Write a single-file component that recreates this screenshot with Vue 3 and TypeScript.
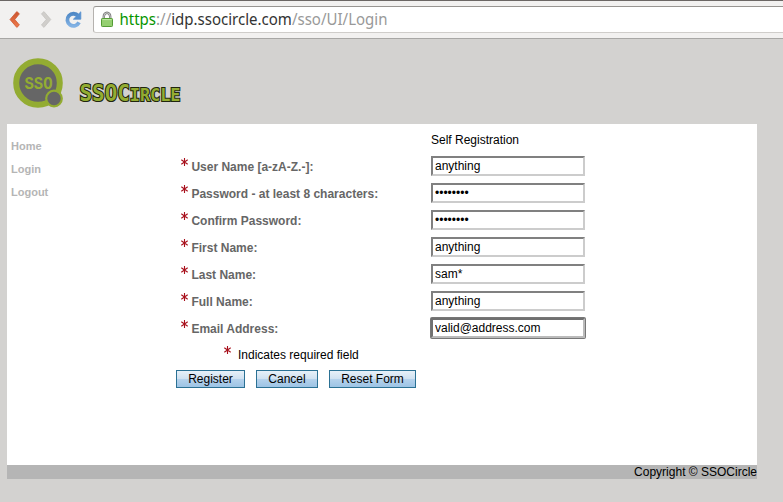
<script setup lang="ts">
import { ref } from 'vue'

interface Field {
  id: string
  label: string
  type: 'text' | 'password'
  value: string
  active?: boolean
}

interface Action {
  name: string
  label: string
}

const links: string[] = ['Home', 'Login', 'Logout']
const actions: Action[] = [
  { name: 'register', label: 'Register' },
  { name: 'cancel', label: 'Cancel' },
  { name: 'reset', label: 'Reset Form' },
]

const fields = ref<Field[]>([
  { id: 'user', label: 'User Name [a-zA-Z.-]:', type: 'text', value: 'anything' },
  { id: 'password', label: 'Password - at least 8 characters:', type: 'password', value: 'anything' },
  { id: 'confirm', label: 'Confirm Password:', type: 'password', value: 'anything' },
  { id: 'first', label: 'First Name:', type: 'text', value: 'anything' },
  { id: 'last', label: 'Last Name:', type: 'text', value: 'sam*' },
  { id: 'full', label: 'Full Name:', type: 'text', value: 'anything' },
  { id: 'email', label: 'Email Address:', type: 'text', value: 'valid@address.com', active: true },
])
</script>

<template>
  <div class="window">
    <div class="toolbar">
      <svg class="nav" width="93" height="36" viewBox="0 0 93 36">
        <defs>
          <linearGradient id="back" x1="0" y1="0" x2="0" y2="1">
            <stop offset="0" stop-color="#c9532f" />
            <stop offset="1" stop-color="#f07c4c" />
          </linearGradient>
          <linearGradient id="reload" x1="0" y1="0" x2="0" y2="1">
            <stop offset="0" stop-color="#5089c6" />
            <stop offset="1" stop-color="#82b2e4" />
          </linearGradient>
        </defs>
        <path d="M16.8 9.6L19.4 11.8L14.8 17.5L19.4 23L16.8 25.4L10 17.5Z" fill="url(#back)" stroke="#cf5b35" stroke-width=".8" stroke-linejoin="round" />
        <path d="M44 9.6L41.4 11.8L46.2 17.5L41.4 23L44 25.4L50.8 17.5Z" fill="#d0cecb" stroke="#c3c1be" stroke-width=".7" stroke-linejoin="round" />
        <path d="M78.2 14A6.1 6.1 0 1 0 79 20.4" fill="none" stroke="url(#reload)" stroke-width="3.8" />
        <path d="M80.8 9.8V17.2H73.4Z" fill="#5791cf" stroke="#5791cf" stroke-width=".8" stroke-linejoin="round" />
      </svg>
      <div class="address">
        <svg width="340" height="25" viewBox="0 0 340 25">
          <path d="M9.8 12.5V9.5A3.2 3.7 0 0 1 16.2 9.5V12.5" fill="none" stroke="#777" stroke-width="2.4" />
          <path d="M9.8 12.5V9.5A3.2 3.7 0 0 1 16.2 9.5V12.5" fill="none" stroke="#d5d5d5" stroke-width=".9" />
          <rect x="7.5" y="11.5" width="11" height="8" rx=".8" fill="#94cf70" stroke="#559c36" />
          <path d="M8.5 12.6H17.5" stroke="#c0e8a6" />
          <text class="url" x="25.5" y="18" textLength="268" lengthAdjust="spacingAndGlyphs"><tspan class="secure">https</tspan><tspan class="muted">://</tspan>idp.ssocircle.com<tspan class="muted">/sso/UI/Login</tspan></text>
        </svg>
      </div>
    </div>

    <header class="banner">
      <svg width="240" height="85" viewBox="0 0 240 85">
        <circle cx="38" cy="44" r="21.8" fill="#666" stroke="#93ac32" stroke-width="6" />
        <circle cx="54" cy="59.5" r="7.8" fill="#666" stroke="#93ac32" stroke-width="2.2" />
        <text class="badge" x="24.5" y="50" textLength="28" lengthAdjust="spacingAndGlyphs">SSO</text>
        <text class="brand" x="79.5" y="62" textLength="101" lengthAdjust="spacingAndGlyphs">SSOC<tspan class="small">IRCLE</tspan></text>
      </svg>
    </header>

    <main class="panel">
      <nav class="menu">
        <a v-for="link in links" :key="link">{{ link }}</a>
      </nav>
      <form class="form" @submit.prevent>
        <div class="title">Self Registration</div>
        <div v-for="field in fields" :key="field.id" class="row">
          <svg class="star" width="7" height="9" viewBox="0 0 7 9"><path d="M3.5 0V8M.3 1.8L6.7 6.2M6.7 1.8L.3 6.2" /></svg>
          <label :for="field.id">{{ field.label }}</label>
          <input :id="field.id" v-model="field.value" :type="field.type" :class="{ active: field.active }" />
        </div>
        <div class="note">
          <svg class="star" width="7" height="9" viewBox="0 0 7 9"><path d="M3.5 0V8M.3 1.8L6.7 6.2M6.7 1.8L.3 6.2" /></svg>
          <span>Indicates required field</span>
        </div>
        <div class="actions">
          <button v-for="action in actions" :key="action.name" type="button" :class="action.name">{{ action.label }}</button>
        </div>
      </form>
    </main>
    <footer class="footer">Copyright © SSOCircle</footer>
  </div>
</template>

<style>
body {
  background: #d3d2d0;
  overflow: hidden;
}
</style>

<style scoped>
.window {
  width: 783px;
  height: 502px;
  font: 12px/14px "Liberation Sans", sans-serif;
  color: #000;
}
.toolbar {
  box-sizing: border-box;
  height: 39px;
  display: flex;
  background: #f2f1f0;
  border-top: 1px solid #6b6765;
  border-bottom: 1px solid #a8a7a5;
}
.nav {
  flex: none;
  margin-top: 1px;
}
.address {
  box-sizing: border-box;
  flex: 1;
  height: 27px;
  margin-top: 5px;
  border: 1px solid #b5b2af;
  border-top-color: #989592;
  border-bottom-color: #cfcdca;
  border-right: 0;
  border-radius: 3px 0 0 3px;
  background: #fff;
}
.address svg {
  display: block;
}
.url {
  font: 17px "Noto Sans", sans-serif;
  fill: #333;
}
.secure {
  fill: #079500;
}
.muted {
  fill: #999;
}
.banner {
  height: 85px;
}
.badge {
  font: bold 18px "Liberation Mono", monospace;
  fill: #93ac32;
}
.brand {
  font-family: "DejaVu Sans Mono", monospace;
  font-size: 23px;
  font-weight: bold;
  fill: #93ac32;
  stroke: #20250e;
  stroke-width: 2.2px;
  stroke-linejoin: miter;
  paint-order: stroke;
}
.small {
  font-size: 18.5px;
}
.panel {
  display: flex;
  width: 750px;
  height: 341px;
  margin-left: 7px;
  background: #fff;
}
.menu {
  box-sizing: border-box;
  width: 169px;
  padding: 11px 0 0 4px;
  display: flex;
  flex-direction: column;
  font-size: 11px;
  font-weight: bold;
  line-height: 23px;
  color: #b5b5b5;
}
.form {
  width: 420px;
}
.title {
  padding: 9px 0 0 255px;
  height: 20px;
}
.row {
  display: grid;
  grid-template-columns: 10.4px 239.6px 154px;
  height: 27px;
  padding-left: 5px;
  align-items: start;
}
.star {
  margin-top: 5px;
  overflow: visible;
}
.star path {
  fill: none;
  stroke: #a8101c;
  stroke-width: 1.1;
}
label {
  margin-top: 7px;
  font-weight: bold;
  color: #666;
}
input {
  box-sizing: border-box;
  width: 154px;
  height: 20px;
  margin: 3px 0 0;
  padding: 0 2px 1px;
  border: 2px solid;
  border-color: #808080 #ccc #ccc #808080;
  background: #fff;
  color: #000;
  font: 12px "Liberation Sans", sans-serif;
  outline: none;
}
input.active {
  border-color: #707070 #bbb #bbb #707070;
  box-shadow: 0 0 0 1px #777;
  border-radius: 1px;
}
.note {
  display: flex;
  height: 28px;
  padding-left: 48px;
  gap: 7px;
}
.note .star {
  margin-top: 4px;
}
.note span {
  margin-top: 6px;
}
.actions {
  display: flex;
  gap: 11px;
}
button {
  height: 18px;
  margin: 0;
  padding: 0;
  border: 1px solid #2b7194;
  border-radius: 0;
  background: linear-gradient(#e7f0f8 0%, #cfe1f1 50%, #b5d2ec 51%, #9dc4e5 100%);
  font: 12px/14px "Liberation Sans", sans-serif;
  color: #000;
}
.register {
  width: 69px;
}
.cancel {
  width: 62px;
}
.reset {
  width: 87px;
}
.footer {
  width: 750px;
  height: 14px;
  margin-left: 7px;
  background: #b5b5b5;
  text-align: right;
}
</style>
